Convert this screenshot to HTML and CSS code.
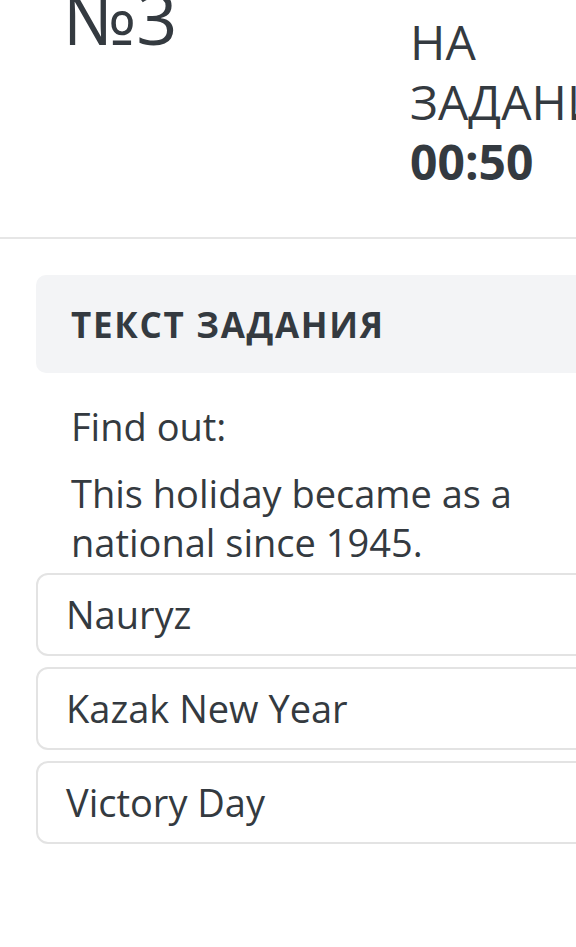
FILE: index.html
```html
<!DOCTYPE html>
<html lang="ru">
<head>
<meta charset="utf-8">
<title>Задание №3</title>
<link rel="stylesheet" href="styles.css">
</head>
<body>
<div class="page">
  <header class="task-head">
    <div class="task-num">№3</div>
    <div class="timer">
      <div class="timer-label">НА ЗАДАНИЕ</div>
      <div class="timer-value">00:50</div>
    </div>
  </header>
  <main class="task-body">
    <div class="task-title">ТЕКСТ ЗАДАНИЯ</div>
    <div class="task-text">
      <p>Find out:</p>
      <p>This holiday became as a national since 1945.</p>
    </div>
    <div class="options">
      <div class="option">Nauryz</div>
      <div class="option">Kazak New Year</div>
      <div class="option">Victory Day</div>
    </div>
  </main>
</div>
</body>
</html>
```

FILE: styles.css
```css
html, body {
  margin: 0;
  padding: 0;
  overflow: hidden;
  background: #ffffff;
}
.page {
  width: 900px;
  font-family: "Open Sans", "Liberation Sans", sans-serif;
  color: #343a40;
}
.task-head {
  display: flex;
  align-items: flex-start;
  height: 237px;
  border-bottom: 2px solid #e6e6e6;
}
.task-num {
  margin-left: 63px;
  margin-top: -19px;
  font-size: 72px;
  font-weight: 400;
  line-height: 1;
  width: 347px;
}
.timer {
  padding-top: 12px;
  font-size: 48px;
  line-height: 60px;
}
.timer-label {
  width: 200px;
}
.timer-value {
  font-weight: 700;
}
.task-body {
  padding: 36px 0 0 36px;
}
.task-title {
  width: 700px;
  height: 98px;
  box-sizing: border-box;
  padding-left: 35px;
  display: flex;
  align-items: center;
  background: #f3f4f6;
  border-radius: 10px;
  font-size: 35px;
  font-weight: 700;
  letter-spacing: 1.7px;
}
.task-text {
  width: 500px;
  padding: 29px 0 0 35px;
  font-size: 38px;
  line-height: 49px;
}
.task-text p {
  margin: 0 0 18px;
}
.task-text p:last-child {
  margin-bottom: 0;
}
.options {
  margin-top: 6px;
  display: flex;
  flex-direction: column;
  gap: 11px;
}
.option {
  width: 700px;
  box-sizing: border-box;
  border: 2px solid #e3e3e3;
  border-radius: 12px;
  padding: 13px 28px;
  font-size: 38px;
  line-height: 53px;
}
```
